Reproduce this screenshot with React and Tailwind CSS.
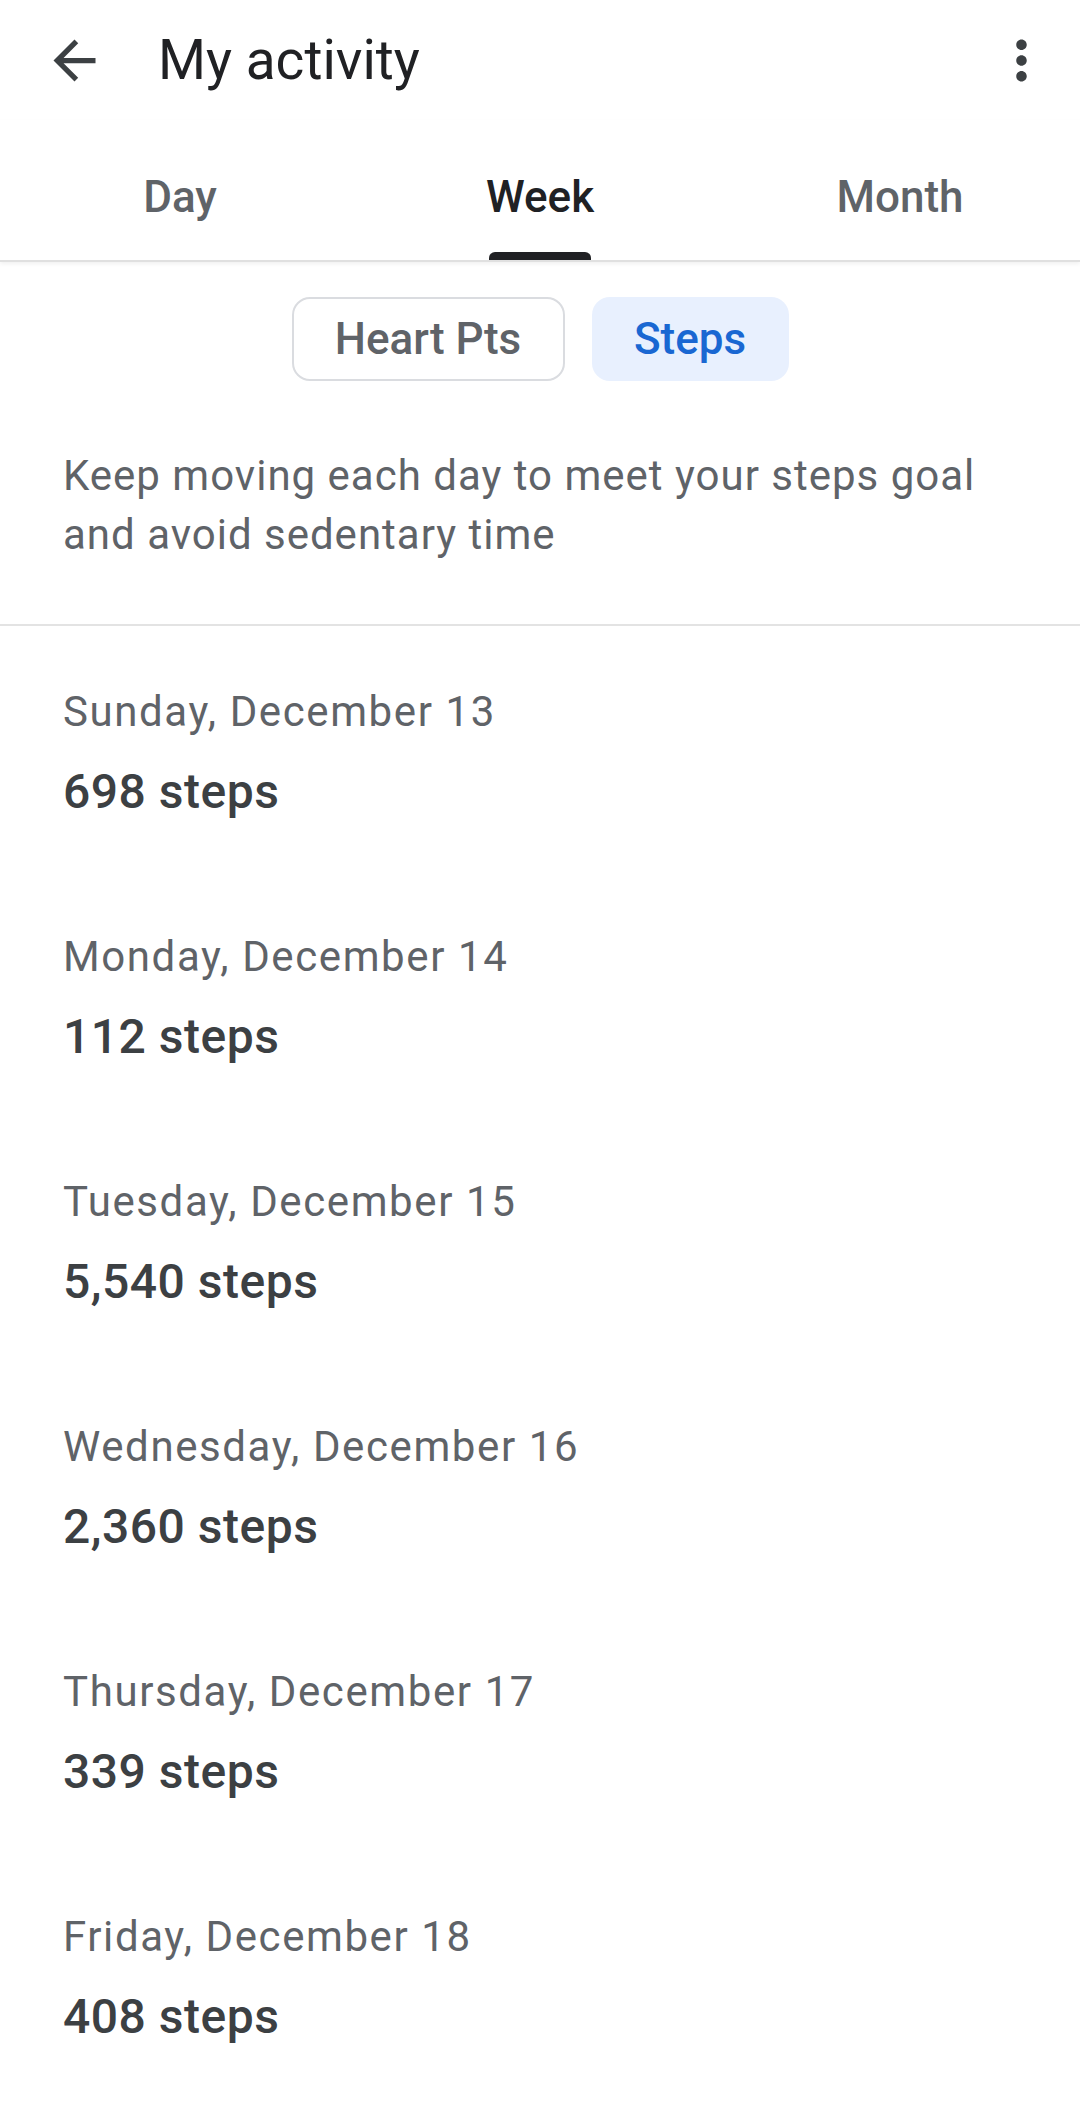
import React from 'react';

const days = [
    { date: 'Sunday, December 13', steps: '698 steps' },
    { date: 'Monday, December 14', steps: '112 steps' },
    { date: 'Tuesday, December 15', steps: '5,540 steps' },
    { date: 'Wednesday, December 16', steps: '2,360 steps' },
    { date: 'Thursday, December 17', steps: '339 steps' },
    { date: 'Friday, December 18', steps: '408 steps' },
];

const tabs = ['Day', 'Week', 'Month'];

const App = () => {
    return (
        <div className="w-[1080px] min-h-[2101px] bg-white font-['Roboto','Liberation_Sans',sans-serif]">
            {/* Top bar */}
            <div className="flex items-center h-[120px] pl-[43px] pr-[27px]">
                <svg viewBox="0 0 24 24" className="w-[63px] h-[63px] fill-[#3c4043]">
                    <path d="M20 11H7.83l5.59-5.59L12 4l-8 8 8 8 1.41-1.41L7.83 13H20v-2z" />
                </svg>
                <h1 className="ml-[52px] text-[55px] leading-[64px] text-[#202124] flex-1">My activity</h1>
                <svg viewBox="0 0 24 24" className="w-[63px] h-[63px] fill-[#3c4043]">
                    <path d="M12 8c1.1 0 2-.9 2-2s-.9-2-2-2-2 .9-2 2 .9 2 2 2zm0 2c-1.1 0-2 .9-2 2s.9 2 2 2 2-.9 2-2-.9-2-2-2zm0 6c-1.1 0-2 .9-2 2s.9 2 2 2 2-.9 2-2-.9-2-2-2z" />
                </svg>
            </div>

            {/* Tabs */}
            <div className="grid grid-cols-3 border-b-2 border-[#e0e0e0] shadow-[0_2px_4px_rgba(0,0,0,0.06)]">
                {tabs.map((tab) => {
                    const active = tab === 'Week';
                    return (
                        <div key={tab} className="flex flex-col items-center pt-[56px]">
                            <span className={active
                                ? 'text-[44px] leading-[42px] font-medium text-[#202124]'
                                : 'text-[44px] leading-[42px] font-medium text-[#5f6368]'}>
                                {tab}
                            </span>
                            <div className={active
                                ? 'mt-[34px] h-[8px] w-[102px] rounded-t-[6px] bg-[#202124]'
                                : 'mt-[34px] h-[8px] w-[102px]'} />
                        </div>
                    );
                })}
            </div>

            {/* Metric chips */}
            <div className="flex justify-center gap-[27px] mt-[35px]">
                <div className="flex items-center justify-center w-[273px] h-[84px] rounded-[18px] border-2 border-[#dadce0] text-[44px] font-medium text-[#5f6368]">
                    Heart Pts
                </div>
                <div className="flex items-center justify-center w-[197px] h-[84px] rounded-[18px] bg-[#e8f0fe] text-[44px] font-medium text-[#1967d2]">
                    Steps
                </div>
            </div>

            {/* Description */}
            <p className="mt-[65px] px-[63px] text-[42px] leading-[59px] tracking-[1px] text-[#5f6368]">
                Keep moving each day to meet your steps goal and avoid sedentary time
            </p>
            <div className="mt-[60px] h-[2px] bg-[#e3e3e3]" />

            {/* Day list */}
            <div className="pt-[3px]">
                {days.map((day) => (
                    <div key={day.date} className="px-[63px] pt-[55px] pb-[52px]">
                        <p className="text-[42px] leading-[56px] tracking-[1.6px] text-[#5f6368]">{day.date}</p>
                        <p className="mt-[22px] text-[48px] leading-[60px] tracking-[0.5px] font-medium text-[#3c4043]">{day.steps}</p>
                    </div>
                ))}
            </div>
        </div>
    );
};

export default App;
